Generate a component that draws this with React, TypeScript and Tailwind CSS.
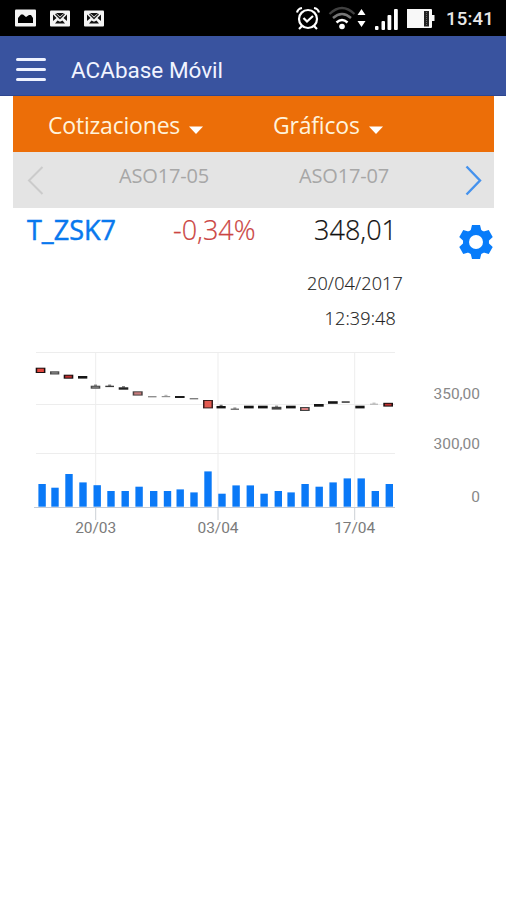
interface Candle {
  x: number;
  y: number;
  w: number;
  h: number;
  color: string;
  fill?: string;
  wick?: boolean;
}

const CANDLES: Candle[] = [
  { x: 35.7, y: 27.7, w: 9.7, h: 5.3, color: "#1a1010", fill: "#e3483f" },
  { x: 50, y: 31.3, w: 9.3, h: 3.2, color: "#4a4a4a", fill: "#8a8a8a" },
  { x: 63.7, y: 34.7, w: 9.6, h: 4, color: "#1a1010", fill: "#c03030" },
  { x: 78, y: 36, w: 9.3, h: 2.6, color: "#161616" },
  { x: 90.7, y: 45.7, w: 9.6, h: 3, color: "#4a4a4a", fill: "#8a8a8a", wick: true },
  { x: 105.3, y: 45.7, w: 8.7, h: 1.4, color: "#3a3a3a", wick: true },
  { x: 118.7, y: 47.3, w: 9.6, h: 2.4, color: "#222222", wick: true },
  { x: 132.7, y: 51.3, w: 10, h: 4.3, color: "#4a4040", fill: "#c77b7b" },
  { x: 148, y: 56, w: 8.5, h: 1.4, color: "#909090" },
  { x: 161.7, y: 56, w: 8.5, h: 1.2, color: "#909090", wick: true },
  { x: 175, y: 56, w: 9.6, h: 2, color: "#1c1c1c" },
  { x: 189.7, y: 58, w: 8.5, h: 1.4, color: "#808080" },
  { x: 203, y: 60, w: 10, h: 8.4, color: "#3b2020", fill: "#e45a50" },
  { x: 216.5, y: 66, w: 9.2, h: 2.4, color: "#141414", wick: true },
  { x: 230.7, y: 68.6, w: 8.3, h: 1.2, color: "#555555", wick: true },
  { x: 244, y: 65.7, w: 9.7, h: 2.7, color: "#141414" },
  { x: 258, y: 65.7, w: 9.7, h: 2.7, color: "#141414" },
  { x: 271.7, y: 66.8, w: 9.7, h: 2.8, color: "#444444", wick: true },
  { x: 286, y: 65.7, w: 9.7, h: 2.7, color: "#141414" },
  { x: 300, y: 67, w: 9.7, h: 4, color: "#444444", fill: "#d98080" },
  { x: 314, y: 64, w: 9.7, h: 2.7, color: "#141414" },
  { x: 328, y: 61.2, w: 9.7, h: 2.6, color: "#141414" },
  { x: 341.7, y: 61.3, w: 8, h: 1.5, color: "#333333" },
  { x: 355.3, y: 65.7, w: 9.3, h: 2.7, color: "#141414" },
  { x: 370, y: 63.7, w: 8, h: 1, color: "#aaaaaa", wick: true },
  { x: 383.3, y: 62.8, w: 9.7, h: 3.8, color: "#1a1010", fill: "#c03030" },
];

// [x, height]
const VOLUMES: [number, number][] = [
  [38.4, 22.7], [51.3, 19], [65.3, 32.7], [79.3, 24.3], [93.5, 21.5],
  [107.3, 15.7], [121.5, 15.7], [135.4, 20], [150, 15.7], [163.8, 15.7],
  [176.5, 17.3], [190.3, 14.3], [204.3, 35.3], [218.3, 13], [232.4, 21.3],
  [246.6, 21.3], [260.4, 13], [274.6, 15.7], [287.4, 14.3], [301.4, 22.7],
  [315.5, 20], [329.4, 24.3], [343.6, 28.3], [357.5, 28.3], [371.6, 15.7],
  [385.6, 22.7],
];

const DATES = [
  { x: 95.7, label: "20/03" },
  { x: 218, label: "03/04" },
  { x: 354.7, label: "17/04" },
];

const BASELINE = 166.7;

function MailIcon() {
  return (
    <svg width="20" height="17" viewBox="0 0 20 17" aria-hidden="true">
      <rect width="20" height="16" y=".5" rx="1" fill="#f4f4f4" />
      <path d="M6 3h8l-4 3.500zM3 4.500l3.500 3.500L3 11zM17 4.500 13.500 8l3.500 3zM5 13.500l2.500-3 2.500 1.200 2.500-1.200 2.500 3z" fill="#111" />
      <path d="m5.500 4 4.500 4.500L14.500 4" fill="none" stroke="#222" strokeWidth="1.300" />
    </svg>
  );
}

function GearIcon() {
  return (
    <svg className="mt-[14px] mr-[10px]" width="40" height="40" viewBox="-20 -20 40 40" fill="#087cfa" aria-hidden="true">
      <circle r="13" />
      <path d="M-4-17h8l1.500 6v22L4 17h-8l-1.500-6v-22z" />
      <path d="M-4-17h8l1.500 6v22L4 17h-8l-1.500-6v-22z" transform="rotate(60)" />
      <path d="M-4-17h8l1.500 6v22L4 17h-8l-1.500-6v-22z" transform="rotate(120)" />
      <circle r="7" fill="#fff" />
    </svg>
  );
}

function StatusBar() {
  return (
    <header className="flex h-9 items-center bg-black text-white">
      <div className="ml-[15px] flex items-center gap-[14px]">
        <svg width="21" height="18" viewBox="0 0 21 18" aria-hidden="true">
          <rect y=".5" width="21" height="17" rx="1" fill="#f4f4f4" />
          <path d="M3 14V9l3-3.500h2l3 2.500 3-2h2l2 3v5z" fill="#000" />
        </svg>
        <MailIcon />
        <MailIcon />
      </div>
      <svg className="ml-auto" width="142" height="30" viewBox="295 3 142 30" fill="none" aria-hidden="true">
        <g stroke="#fff" strokeWidth="2.200">
          <circle cx="308" cy="19" r="9" />
          <path d="m303.500 18 3.500 3.500 6-5.500M297 12.500q1-4 5-4.500M319 12.500q-1-4-5-4.500M302 26l-3 3M314 26l3 3" />
        </g>
        <path d="M329.500 14q12.500-12 25 0" stroke="#404040" strokeWidth="2.200" />
        <path d="M333 18q9-8 18 0" stroke="#777" strokeWidth="2.400" />
        <path d="M336.500 22.500q5.500-5 11 0" stroke="#fff" strokeWidth="2.400" />
        <circle cx="342" cy="26.500" r="2.800" fill="#fff" />
        <path d="m361.500 9 4 6h-8zM361.500 27l4-6h-8z" fill="#fff" />
        <g fill="#fff">
          <rect x="375" y="26" width="3.500" height="4" rx="1" />
          <rect x="381.500" y="21" width="3.500" height="9" rx="1" />
          <rect x="387.500" y="15" width="3.800" height="15" rx="1" />
          <rect x="394" y="9" width="3.800" height="21" rx="1" />
        </g>
        <path d="M407 9h24q1 0 1 1v5h2.500v6H432v6q0 1-1 1h-24z" fill="#f8f8f8" />
        <rect x="424" y="11" width="5" height="15.500" fill="#222" />
        <path d="M426.500 12v14" stroke="#666" strokeDasharray="1 1" />
      </svg>
      <span className="mt-0.5 ml-[9px] w-[60px] font-[Roboto] text-[18.500px] leading-none font-medium tracking-[0.200px] text-[#e8e8e8]">15:41</span>
    </header>
  );
}

function TitleBar() {
  return (
    <div className="flex h-[60px] items-center border-b border-[#2e4690] bg-[#39539f] pt-2">
      <div className="ml-4 flex flex-col gap-[6.500px]">
        <span className="h-[3.200px] w-[30px] rounded-sm bg-[#eef2ff]" />
        <span className="h-[3.200px] w-[30px] rounded-sm bg-[#eef2ff]" />
        <span className="h-[3.200px] w-[30px] rounded-sm bg-[#eef2ff]" />
      </div>
      <h1 className="mt-0.5 ml-[25px] font-[Roboto] text-[22.500px] text-[#f1f4ff]">ACAbase Móvil</h1>
    </div>
  );
}

function MenuButton({ label }: { label: string }) {
  return (
    <button className="flex items-center gap-[9px] pt-[3px] text-[23px] leading-none tracking-[-0.200px] text-[#fff3dc]">
      {label}
      <svg className="mt-2" width="14" height="8" viewBox="0 0 14 8" aria-hidden="true">
        <path d="M0 .5h14L7 8z" fill="#fff" />
      </svg>
    </button>
  );
}

function Chart() {
  return (
    <svg className="block" width="506" height="205" viewBox="0 0 506 205" aria-label="T_ZSK7">
      <g stroke="#ededed" strokeWidth="1">
        <path d="M36 12.500h359M36 64.500h359M36 113.500h359" />
        {DATES.map((d) => (
          <path key={d.label} d={`M${d.x} 12.500V167`} />
        ))}
      </g>
      {VOLUMES.map(([x, h]) => (
        <rect key={x} x={x} y={BASELINE - h} width="7.400" height={h} fill="#0a79f7" />
      ))}
      <path d="M34 167.500h361" stroke="#c3cbd6" />
      {CANDLES.map((c) => (
        <g key={c.x}>
          {c.wick && <rect x={c.x + c.w / 2 - 1.500} y={c.y - 1.200} width="3" height="1.500" fill={c.color} opacity=".6" />}
          <rect x={c.x} y={c.y} width={c.w} height={c.h} fill={c.color} />
          {c.fill && <rect x={c.x + 1.500} y={c.y + 1} width={c.w - 3} height={c.h - 2} fill={c.fill} />}
        </g>
      ))}
      <g className="font-[Roboto] text-[15.500px]" fill="#7b7b7b">
        {DATES.map((d) => (
          <g key={d.label}>
            <path d={`M${d.x} 168v12`} stroke="#ccd0d5" />
            <text x={d.x} y="193" textAnchor="middle" textLength="41">{d.label}</text>
          </g>
        ))}
      </g>
      <g className="font-[Roboto] text-[15.500px]" fill="#888888" textAnchor="end">
        <text x="480" y="58.500" textLength="46.500">350,00</text>
        <text x="480" y="109" textLength="46.500">300,00</text>
        <text x="480" y="162">0</text>
      </g>
    </svg>
  );
}

export default function App() {
  return (
    <div className="h-[900px] w-[506px] overflow-hidden bg-white font-['Open_Sans','Noto_Sans',sans-serif]">
      <StatusBar />
      <TitleBar />
      <nav className="mr-3 ml-[13px] flex h-14 bg-[#ec6e08]">
        <div className="flex w-[225px] pl-[35px]">
          <MenuButton label="Cotizaciones" />
        </div>
        <div className="flex pl-[35px]">
          <MenuButton label="Gráficos" />
        </div>
      </nav>
      <div className="mr-3 ml-[13px] flex h-14 items-center bg-[#e4e4e4] text-[20px] tracking-[-0.150px] text-[#a7a7a7]">
        <svg className="ml-[14px]" width="17" height="32" viewBox="0 0 17 32" fill="none" aria-hidden="true">
          <path d="M15.500 3 2 16.500 15.500 30" stroke="#cbcbcb" strokeWidth="2" />
        </svg>
        <span className="mb-[8px] ml-[75px] w-[180px] leading-none">ASO17-05</span>
        <span className="mb-[8px] leading-none">ASO17-07</span>
        <svg className="mr-3 ml-auto" width="17" height="32" viewBox="0 0 17 32" fill="none" aria-hidden="true">
          <path d="M1.500 2.500 15 16.500 1.500 30.500" stroke="#4592ed" strokeWidth="2.400" />
        </svg>
      </div>
      <main>
        <section className="flex h-[132px] justify-between">
          <div className="flex pt-2 leading-none">
            <strong className="ml-[27px] w-[146px] text-[27px] font-medium text-[#0878ee] [-webkit-text-stroke:0.500px_#0878ee]">T_ZSK7</strong>
            <span className="w-[125px] text-[27px] font-light text-[#cb4543] [-webkit-text-stroke:0.200px_#cb4543]">-0,34%</span>
            <div className="ml-[9px] text-right text-[#222]">
              <div className="mr-[6px] text-[27px] font-light text-[#111] [-webkit-text-stroke:0.200px_#111]">348,01</div>
              <div className="mt-[31px] text-[18px] font-light tracking-[0.150px] [-webkit-text-stroke:0.150px_#222]">20/04/2017</div>
              <div className="mt-[17px] mr-[7px] text-[18px] font-light tracking-[0.150px] [-webkit-text-stroke:0.150px_#222]">12:39:48</div>
            </div>
          </div>
          <GearIcon />
        </section>
        <Chart />
      </main>
    </div>
  );
}
